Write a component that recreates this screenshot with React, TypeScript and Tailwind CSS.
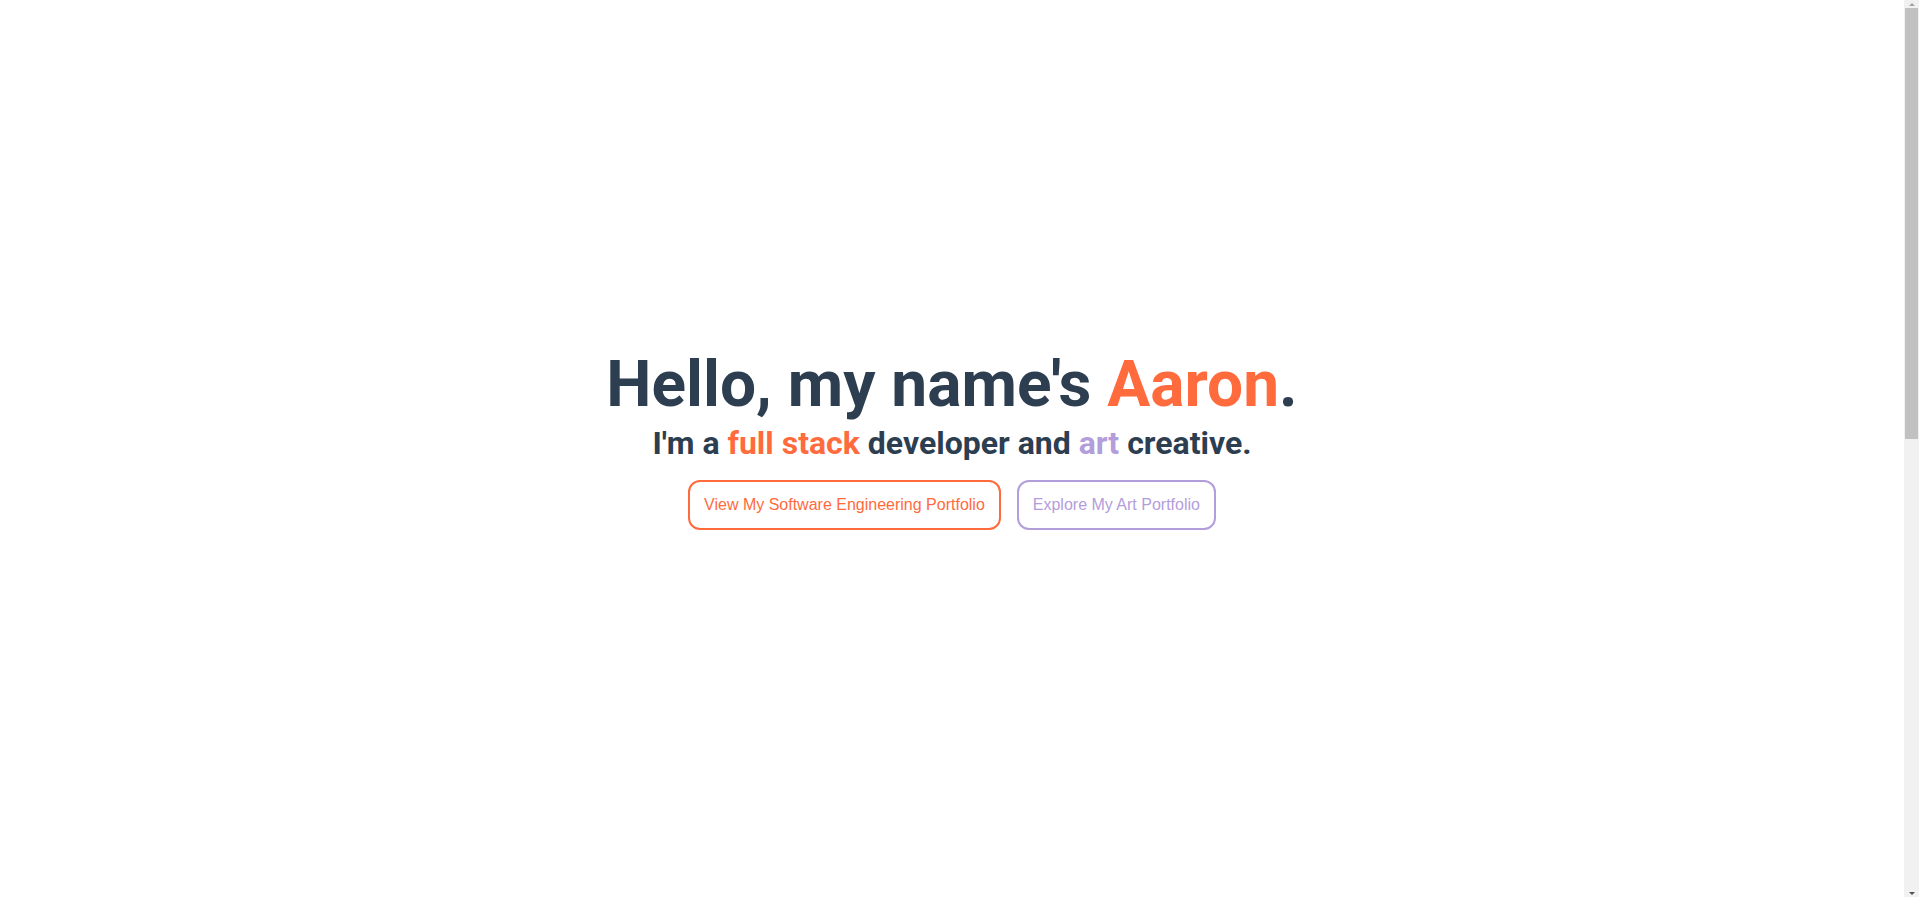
export default function App() {
  return (
    <div className="bg-white font-['Roboto',sans-serif] text-[#2c3e50] pr-[15px]">
      {/* Hero */}
      <section className="h-screen pb-5 flex flex-col items-center justify-center text-center">
        <h1 className="text-[64px] font-bold leading-[1.2]">
          Hello, my name's <span className="text-[#ff6b3d]">Aaron</span>.
        </h1>
        <h2 className="text-[32px] font-bold leading-[1.2]">
          I'm a <span className="text-[#ff6b3d]">full stack</span> developer and{" "}
          <span className="text-[#b39ddb]">art</span> creative.
        </h2>
        <div className="flex gap-4 mt-[18px] font-['Liberation_Sans',Arial,sans-serif] text-base">
          <button className="h-[50px] px-[14px] border-2 border-[#ff6b3d] rounded-xl text-[#ff6b3d] bg-white">
            View My Software Engineering Portfolio
          </button>
          <button className="h-[50px] px-[14px] border-2 border-[#b39ddb] rounded-xl text-[#b39ddb] bg-white">
            Explore My Art Portfolio
          </button>
        </div>
      </section>

      {/* Below the fold */}
      <section className="h-[900px]" />

      {/* Window scrollbar */}
      <div className="fixed top-0 right-0 w-[15px] h-screen bg-[#f1f1f1] flex flex-col items-center">
        <div className="h-[8px] w-full flex items-center justify-center">
          <div className="w-0 h-0 border-x-[3px] border-x-transparent border-b-[3px] border-b-[#a3a3a3]" />
        </div>
        <div className="w-[13px] h-[431px] bg-[#c1c1c1]" />
        <div className="flex-1" />
        <div className="h-[8px] w-full flex items-center justify-center">
          <div className="w-0 h-0 border-x-[3px] border-x-transparent border-t-[3px] border-t-[#505050]" />
        </div>
      </div>
    </div>
  );
}
